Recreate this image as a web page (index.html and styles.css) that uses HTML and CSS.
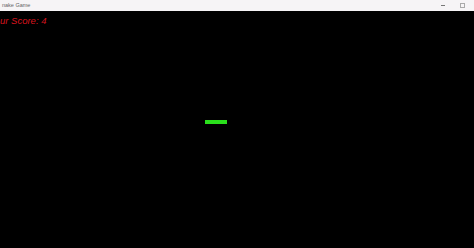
FILE: index.html
```html
<!DOCTYPE html>
<html>
<head>
<meta charset="utf-8">
<link rel="stylesheet" href="styles.css">
</head>
<body>
<div class="window">
  <div class="titlebar">
    <span class="title">nake Game</span>
    <div class="controls">
      <span class="ctl min"></span>
      <span class="ctl max"></span>
    </div>
  </div>
  <div class="game">
    <div class="score">ur Score: 4</div>
    <div class="snake"></div>
  </div>
</div>
</body>
</html>
```
FILE: styles.css
```css
html, body {
  margin: 0;
  padding: 0;
  width: 474px;
  height: 248px;
  overflow: hidden;
  background: #000;
}
.window {
  display: flex;
  flex-direction: column;
  width: 474px;
  height: 248px;
}
.titlebar {
  height: 11px;
  background: #f6f4f6;
  display: flex;
  align-items: center;
  justify-content: space-between;
  overflow: hidden;
}
.title {
  font-family: "Liberation Sans", sans-serif;
  font-size: 5.5px;
  color: #666;
  margin-left: 2px;
  line-height: 11px;
}
.controls {
  display: flex;
  align-items: center;
  gap: 15px;
  margin-right: 9px;
}
.ctl.min {
  width: 4px;
  height: 1px;
  background: #777;
}
.ctl.max {
  width: 3px;
  height: 3px;
  border: 1px solid #aaa;
}
.game {
  flex: 1;
  position: relative;
  background: #000;
  overflow: hidden;
}
.score {
  font-family: "Liberation Sans", sans-serif;
  font-size: 9.5px;
  font-style: italic;
  color: #d8141e;
  margin-left: 0;
  margin-top: 5px;
  line-height: 10px;
  white-space: nowrap;
}
.snake {
  position: absolute;
  left: 205px;
  top: 109px;
  width: 22px;
  height: 4px;
  background: #2adf1c;
}
```
